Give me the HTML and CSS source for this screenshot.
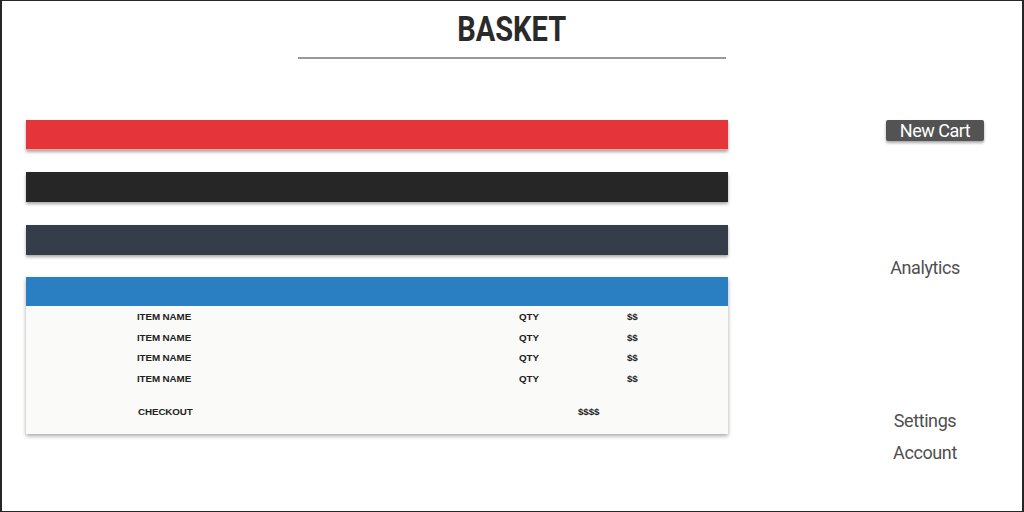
FILE: index.html
```html
<!DOCTYPE html>
<html lang="en">
<head>
  <meta charset="UTF-8" />
  <meta name="viewport" content="width=device-width, initial-scale=1" />
  <title>Basket</title>
  <link rel="stylesheet" href="styles.css">
</head>
<body>

<div class="frame">
  <header>
    <h1>BASKET</h1>
    <div class="rule"></div>
  </header>

  <div class="content">
    <main>
      <div class="bar bar-red"></div>
      <div class="bar bar-black"></div>
      <div class="bar bar-slate"></div>

      <section class="cart">
        <div class="cart-head"></div>
        <div class="cart-body">
          <div class="row"><span>ITEM NAME</span><span>QTY</span><span>$$</span></div>
          <div class="row"><span>ITEM NAME</span><span>QTY</span><span>$$</span></div>
          <div class="row"><span>ITEM NAME</span><span>QTY</span><span>$$</span></div>
          <div class="row"><span>ITEM NAME</span><span>QTY</span><span>$$</span></div>
          <div class="checkout"><span>CHECKOUT</span><span>$$$$</span></div>
        </div>
      </section>
    </main>

    <aside>
      <button class="new-cart">New Cart</button>
      <a class="nav analytics">Analytics</a>
      <a class="nav settings">Settings</a>
      <a class="nav">Account</a>
    </aside>
  </div>
</div>

</body>
</html>
```

FILE: styles.css
```css
body {
  margin: 0;
  background: #fff;
  font-family: Roboto, sans-serif;
  color: #222;
}

.frame {
  width: 1024px;
  height: 512px;
  box-sizing: border-box;
  border: 1px solid #262626;
  border-left-width: 2px;
  border-right-width: 2px;
  overflow: hidden;
}

header {
  text-align: center;
  padding-top: 10px;
}

h1 {
  display: inline-block;
  margin: 0;
  font-size: 35px;
  line-height: 38px;
  font-weight: 700;
  color: #2a2a2a;
  transform: scaleX(0.83);
}

.rule {
  width: 428px;
  height: 2px;
  background: #999;
  margin: 8px auto 0 296px;
}

.content {
  display: flex;
  margin-top: 61px;
}

main {
  width: 702px;
  margin-left: 24px;
}

.bar {
  height: 30px;
  margin-bottom: 22px;
  box-shadow: 0 2px 3px rgba(0, 0, 0, 0.35);
}

.bar-red {
  background: #e5343a;
  border-bottom: 1px solid #f4a89a;
  height: 29px;
}

.bar-black {
  background: #262626;
  margin-bottom: 23px;
}

.bar-slate {
  background: #363d4a;
}

.cart {
  box-shadow: 0 2px 4px rgba(0, 0, 0, 0.35);
}

.cart-head {
  height: 29px;
  background: #2a7fc2;
}

.cart-body {
  background: #fafaf9;
  padding: 1px 0 12px;
  font-family: "Liberation Sans", Arial, sans-serif;
  font-weight: 700;
  font-size: 9.8px;
  letter-spacing: -0.1px;
  color: #222;
}

.row {
  display: grid;
  grid-template-columns: 382px 108px auto;
  padding-left: 111px;
  line-height: 20.5px;
}

.checkout {
  display: grid;
  grid-template-columns: 440px auto;
  padding-left: 112px;
  margin-top: 13px;
  line-height: 20px;
}

aside {
  flex: 1;
  display: flex;
  flex-direction: column;
  align-items: center;
  padding-left: 100px;
}

.new-cart {
  margin-left: 20px;
  width: 98px;
  height: 21px;
  padding: 0;
  border: none;
  border-radius: 2px;
  background: #535353;
  color: #fff;
  font-family: Roboto, sans-serif;
  font-size: 18px;
  line-height: 21px;
  letter-spacing: -0.5px;
  box-shadow: 0 2px 3px rgba(0, 0, 0, 0.35);
}

.nav {
  color: #4f4f4f;
  font-size: 18px;
  line-height: 22px;
  letter-spacing: -0.4px;
}

.analytics {
  margin-top: 116px;
}

.settings {
  margin-top: 131px;
  margin-bottom: 10px;
}
```
